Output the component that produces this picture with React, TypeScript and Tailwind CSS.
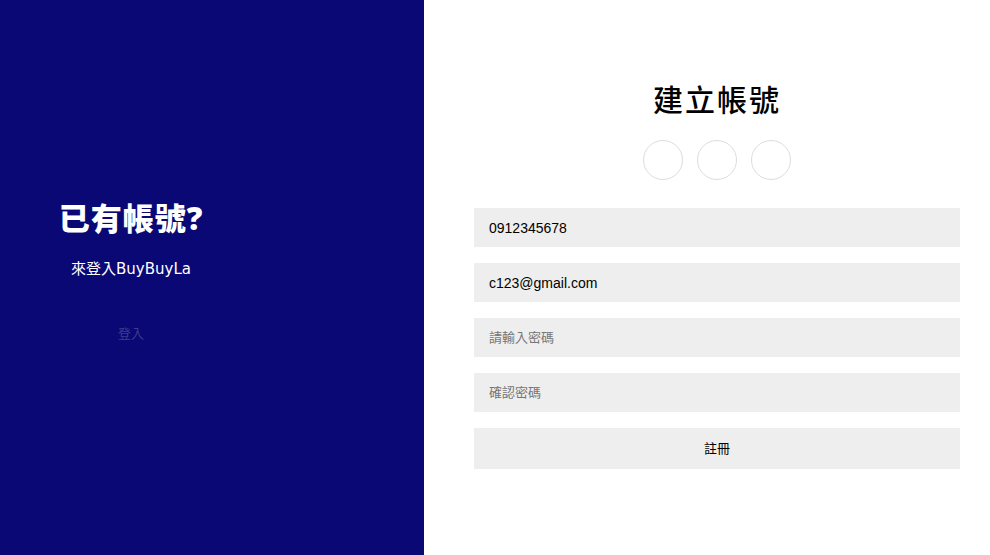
export default function App() {
  return (
    <div className="flex h-[555px] w-[990px] font-['Liberation_Sans','Noto_Sans_CJK_TC',sans-serif]">
      <div className="flex h-full w-[424px] shrink-0 bg-[#0a0875]">
        <div className="flex w-[262px] flex-col items-center pt-[198px]">
          <h2 className="text-[31px] font-black leading-[40px] tracking-[1px] text-white">
            已有帳號<span className="font-['Open_Sans',sans-serif] font-extrabold">?</span>
          </h2>
          <p className="mt-[19px] font-['DejaVu_Sans','Noto_Sans_CJK_TC',sans-serif] text-[15px] leading-[20px] text-white">
            來登入BuyBuyLa
          </p>
          <button className="mt-[45px] text-[13px] leading-[20px] text-[#3d3d8e]">登入</button>
        </div>
      </div>
      <div className="flex flex-1 flex-col items-center bg-white pl-[50px] pr-[30px] pt-[77px]">
        <h1 className="font-['Noto_Sans_CJK_TC',sans-serif] text-[30px] font-medium leading-[42px] tracking-[2px] text-black">
          建立帳號
        </h1>
        <div className="mt-[21px] flex gap-[14px]">
          <div className="size-[40px] rounded-full border border-[#dddddd]" />
          <div className="size-[40px] rounded-full border border-[#dddddd]" />
          <div className="size-[40px] rounded-full border border-[#dddddd]" />
        </div>
        <form className="mt-[28px] flex w-full flex-col gap-[16px]">
          <input
            className="h-[39px] w-full bg-[#eeeeee] px-[15px] text-[14px] text-black outline-none placeholder:text-[#757575]"
            defaultValue="0912345678"
          />
          <input
            className="h-[39px] w-full bg-[#eeeeee] px-[15px] text-[14px] text-black outline-none placeholder:text-[#757575]"
            defaultValue="c123@gmail.com"
          />
          <input
            className="h-[39px] w-full bg-[#eeeeee] px-[15px] text-[13px] text-black outline-none placeholder:text-[#757575]"
            placeholder="請輸入密碼"
          />
          <input
            className="h-[39px] w-full bg-[#eeeeee] px-[15px] text-[13px] text-black outline-none placeholder:text-[#757575]"
            placeholder="確認密碼"
          />
          <button type="button" className="h-[41px] w-full bg-[#eeeeee] text-[13px] text-black">
            註冊
          </button>
        </form>
      </div>
    </div>
  );
}
